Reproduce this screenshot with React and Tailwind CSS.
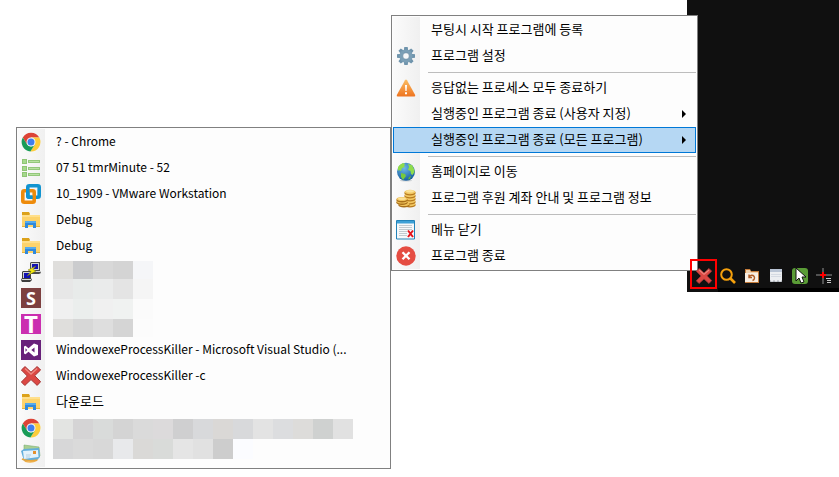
import React from 'react';

function ChromeIcon() {
  return (
    <svg className="w-5 h-5" viewBox="0 0 20 20">
      <path d="M1.8 5.4A9.5 9.5 0 0 1 18.3 5.6H10L5.9 12.2z" fill="#dc4437" />
      <path d="M18.3 5.6A9.5 9.5 0 0 1 9.4 19.5L14 12.3 13.8 7.8 10 5.6z" fill="#fdcd3b" />
      <path d="M1.8 5.4A9.5 9.5 0 0 0 9.4 19.5L14 12.3 10 14.4 6 12.2z" fill="#199c58" />
      <circle cx="10" cy="10" r="4.500" fill="#f5f7fb" />
      <circle cx="10" cy="10" r="3.500" fill="#3f7fee" />
    </svg>
  );
}

function ListIcon() {
  return (
    <svg className="w-5 h-5" viewBox="0 0 20 20">
      {[1, 8, 14].map(y => (
        <g key={y}>
          <rect x="1" y={y} width="5" height="5" fill="#8fc474" />
          <rect x="2" y={y + 1} width="3" height="3" fill="#a5d98c" />
          <rect x="7" y={y + 1} width="12" height="3" fill="#93c77b" />
          <rect x="8" y={y + 2} width="10" height="1" fill="#b8e2a1" />
        </g>
      ))}
    </svg>
  );
}

function VmwareIcon() {
  return (
    <svg className="w-5 h-5" viewBox="0 0 20 20" fill="none" strokeWidth="3.600">
      <rect x="6.800" y="1.800" width="11.400" height="11.400" rx="1.500" stroke="#1294d0" />
      <rect x="1.800" y="6.800" width="11.400" height="11.400" rx="1.500" stroke="#ee8b0b" />
      <path d="M6.800 5v6.500q0 1.700 1.700 1.700h3" stroke="#1294d0" />
    </svg>
  );
}

function FolderIcon() {
  return (
    <svg className="w-5 h-5" viewBox="0 0 20 20">
      <path d="M1 3h7l1 2h10v12H1z" fill="#fdd36b" />
      <path d="M1 2h7l1 2-1 1H1z" fill="#dca21b" />
      <path d="M1 5h18v2H1z" fill="#ffdf8b" />
      <path d="M4 18v-6q0-1 1-1h9q1 0 1 1v6h-3v-3H7v3z" fill="#3089dc" />
      <path d="M4 12q0-1 1-1h9q1 0 1 1v1H4z" fill="#55abee" />
      <path d="M1 16h3v1H1zM15 16h4v1h-4z" fill="#e6b43e" />
    </svg>
  );
}

function PuttyIcon() {
  return (
    <svg className="w-5 h-5" viewBox="0 0 20 20">
      <path d="M9 1l1-1h9v9l1 2-2 1H9l-1-2 1-2z" fill="#4c4c4c" />
      <path d="M10 1h8v7h-8z" fill="#d3d3d3" />
      <path d="M11 2h6v5h-6z" fill="#1111b6" />
      <path d="M9 9h10v1H9z" fill="#d9d9d9" />
      <path d="M1 10l1-1h8v7l1 2-2 2H1l-1-2 1-2z" fill="#3f3f3f" />
      <path d="M2 10h7v6H2z" fill="#d3d3d3" />
      <path d="M3 11h6v5H3z" fill="#1111b6" />
      <path d="M1 17h9v1H1z" fill="#d9d9d9" />
      <path d="M15 4L7 8l3 1.500L6 14l9-5-3-1.500z" fill="#f4e811" stroke="#6b6b12" strokeWidth=".5" />
    </svg>
  );
}

function VisualStudioIcon() {
  return (
    <svg className="w-5 h-5" viewBox="0 0 20 20">
      <path d="M0 0h20v20H0z" fill="#68217a" />
      <path d="M13 3.500l4 1.500v10L13 16.500 7.500 11.800 4.500 14.200 3 13.400V6.600l1.500-.8 3 2.400zM13.500 7.400L10.300 10l3.200 2.600zM4.500 8.300v3.400L6.200 10z" fill="#fff" fillRule="evenodd" />
    </svg>
  );
}

function CrossIcon({ className }) {
  return (
    <svg className={className} viewBox="0 0 20 20">
      <path d="M4 .6L10 6.200 16.200.5 19.600 4 13.700 9.700 19.600 15.700 16.200 19.400 10 13.600 3.800 19.500.4 16 6.300 10 .4 4z" fill="#dc4843" stroke="#a53635" />
      <path d="M4 2.500L10 8l6.200-5.500" fill="none" stroke="#ee8a82" strokeWidth="1.300" />
    </svg>
  );
}

function MailIcon() {
  return (
    <svg className="w-5 h-5" viewBox="0 0 20 20">
      <path d="M3 1l15 2 1 9-16-1z" fill="#a9cf92" stroke="#7bae74" strokeWidth=".6" />
      <path d="M1 14q3 4 9 3 6 0 9-4l-3 4q-5 3-12 1z" fill="#f1b34f" />
      <path d="M0 7l3-2 15-1 1 9-3 3-13 1z" fill="#62aedb" />
      <path d="M2 7l15-1 .5 7L3 15z" fill="#e3f2fb" />
      <path d="M12 7h3v3h-3z" fill="#e4902c" />
      <path d="M5 11h5M5 13h4" stroke="#b4d0e0" />
      <path d="M1 15q6 3 15 1" fill="none" stroke="#e7a63d" strokeWidth="1.500" />
    </svg>
  );
}

function GearIcon() {
  return (
    <svg className="w-5 h-5" viewBox="0 0 20 20">
      <g fill="#6f94ac">
        {[0, 45, 90, 135].map(a => (
          <path key={a} d="M8.300 1h3.400l.6 4h-4.600zM7.700 15h4.600l-.6 4H8.300z" transform={`rotate(${a} 10 10)`} />
        ))}
      </g>
      <circle cx="10" cy="10" r="4.800" fill="none" stroke="#7b9fb6" strokeWidth="3.500" />
      <circle cx="10" cy="10" r="3.300" fill="#f7f8f9" stroke="#557b96" strokeWidth=".6" />
    </svg>
  );
}

function WarningIcon() {
  return (
    <svg className="w-5 h-5" viewBox="0 0 20 20">
      <defs>
        <linearGradient id="warn" x1="0" y1="0" x2="0" y2="1">
          <stop offset="0" stopColor="#fbbd62" />
          <stop offset="1" stopColor="#ee7420" />
        </linearGradient>
      </defs>
      <path d="M9 2.300q1-1.600 2 0L19.200 17q.4 1.500-1 1.500H1.800q-1.400 0-1-1.500z" fill="url(#warn)" />
      <path d="M9 7h2l-.4 6H9.400zM9 14.300h2v1.900H9z" fill="#fff" />
    </svg>
  );
}

function GlobeIcon() {
  return (
    <svg className="w-5 h-5" viewBox="0 0 20 20">
      <defs>
        <radialGradient id="ocean" cx=".4" cy=".3" r=".7">
          <stop offset="0" stopColor="#6db8ea" />
          <stop offset="1" stopColor="#17609f" />
        </radialGradient>
      </defs>
      <ellipse cx="10" cy="18.500" rx="6" ry="1" fill="#cfd3d6" />
      <circle cx="10" cy="9.800" r="9" fill="url(#ocean)" />
      <path d="M2 5q2-3 5-4l2 1-1 2 1 1-3 1-1 3-2-1-1 1z" fill="#8fdc4c" />
      <path d="M5 11l4 1 1 2-3 4-2-3z" fill="#77ca3c" />
      <path d="M12 2l4 1 2 4 .5 3-2 3-1.500-1-.5-3-2.500-1 1-3z" fill="#8fdc4c" />
      <path d="M13 15l2-1-1 3-2 .5z" fill="#5fb539" />
    </svg>
  );
}

function CoinsIcon() {
  return (
    <svg className="w-5 h-5" viewBox="0 0 20 20">
      {[17, 14, 11, 8, 5].map(y => (
        <g key={y}>
          <ellipse cx="14" cy={y} rx="5.700" ry="2.500" fill="#b67a1e" />
          <ellipse cx="14" cy={y - 1} rx="5.500" ry="2.200" fill="#f2c863" />
        </g>
      ))}
      <ellipse cx="14" cy="3.300" rx="4" ry="1.300" fill="#fbe29a" />
      {[17, 14.5, 12].map((y, i) => (
        <g key={y}>
          <ellipse cx={i === 0 ? 8 : 6} cy={y} rx="5.700" ry="2.500" fill="#a86f1b" />
          <ellipse cx={i === 0 ? 8 : 6} cy={y - 1} rx="5.500" ry="2" fill="#f0c35b" />
        </g>
      ))}
      <ellipse cx="6" cy="10.700" rx="4" ry="1.200" fill="#fbe29a" />
    </svg>
  );
}

function CloseMenuIcon() {
  return (
    <svg className="w-5 h-5" viewBox="0 0 20 20">
      <path d="M.5.500h18v18.500H.5z" fill="#f5f8fa" stroke="#2183b9" />
      <path d="M1 1h17v2.500H1z" fill="#3da0d6" />
      <path d="M3 5.500h13M3 7.500h13M3 9.500h13M3 11.500h8M3 13.500h8M3 15.500h8" stroke="#c2cacf" />
      <path d="M12 10.500l5 6.500M17 10.500l-5 6.500" stroke="#e5131b" strokeWidth="2" />
    </svg>
  );
}

function ExitIcon() {
  return (
    <svg className="w-5 h-5" viewBox="0 0 20 20">
      <circle cx="10" cy="10" r="9.700" fill="#e54d42" />
      <path d="M6.500 6.200l7 7M13.500 6.200l-7 7" stroke="#fff" strokeWidth="2.300" />
    </svg>
  );
}

function LetterIcon({ letter, className }) {
  return (
    <span className={`w-5 h-5 flex items-center justify-center text-white font-bold leading-5 font-['Open_Sans',sans-serif] ${className}`}>
      {letter}
    </span>
  );
}

function SearchTrayIcon() {
  return (
    <svg className="w-4 h-4" viewBox="0 0 16 16" fill="none" stroke="#f6a10c">
      <circle cx="6.500" cy="6.500" r="5.300" strokeWidth="2" />
      <path d="M10.500 10.500l4.500 4.500" strokeWidth="2.600" />
    </svg>
  );
}

function RestoreTrayIcon() {
  return (
    <svg className="w-4 h-4" viewBox="0 0 16 16">
      <path d="M1 1h5l1 2h8v12H1z" fill="#c47b3a" />
      <path d="M1 5h13v9H1z" fill="#f8eee2" />
      <path d="M2 2h4l1 2h7v1H2z" fill="#f1d3ae" />
      <path d="M5.500 8.500a2.700 2.700 0 1 1 3 4M5 6.500v3h3" fill="none" stroke="#b05d25" strokeWidth="1.400" />
    </svg>
  );
}

function NoteTrayIcon() {
  return (
    <svg className="w-4 h-4" viewBox="0 0 16 16">
      <path d="M2 1h12v13H2z" fill="#eceef1" />
      <path d="M2 1h12v3H2z" fill="#b9c4d4" />
      <path d="M3 6.500h10M3 8.500h10" stroke="#d5dae2" />
      <path d="M2 14v-2l2 2 2-2 2 2 2-2 2 2 2-2v2z" fill="#a9aeb5" />
    </svg>
  );
}

function PointerTrayIcon() {
  return (
    <svg className="w-4 h-4" viewBox="0 0 16 16">
      <rect width="16" height="16" rx="3" fill="#5a9c36" />
      <path d="M4 0v13l3-3 2 5 3-1-2-5h4z" fill="#fff" stroke="#111" />
    </svg>
  );
}

function CrosshairTrayIcon() {
  return (
    <svg className="w-4 h-4" viewBox="0 0 16 16">
      <path d="M7 0v16M0 7h16" stroke="#525252" strokeWidth="2" />
      <path d="M7 4v6M4 7h6" stroke="#f00" strokeWidth="2" />
      <path d="M10 10.500h5M11 12.500h4M11 14.500h4" stroke="#c8c8c8" />
    </svg>
  );
}

const WINDOWS_TOP = [
  { icon: <ChromeIcon />, label: '? - Chrome' },
  { icon: <ListIcon />, label: '07 51 tmrMinute - 52' },
  { icon: <VmwareIcon />, label: '10_1909 - VMware Workstation' },
  { icon: <FolderIcon />, label: 'Debug' },
  { icon: <FolderIcon />, label: 'Debug' },
];

const WINDOWS_BOTTOM = [
  { icon: <VisualStudioIcon />, label: 'WindowexeProcessKiller - Microsoft Visual Studio (...' },
  { icon: <CrossIcon className="w-5 h-5" />, label: 'WindowexeProcessKiller -c' },
  { icon: <FolderIcon />, label: '다운로드', textSize: 'text-[13px]' },
];

// groups are split by separators
const MENU_GROUPS = [
  [
    { label: '부팅시 시작 프로그램에 등록' },
    { icon: <GearIcon />, label: '프로그램 설정' },
  ],
  [
    { icon: <WarningIcon />, label: '응답없는 프로세스 모두 종료하기' },
    { label: '실행중인 프로그램 종료 (사용자 지정)', submenu: true },
    { label: '실행중인 프로그램 종료 (모든 프로그램)', submenu: true, active: true },
  ],
  [
    { icon: <GlobeIcon />, label: '홈페이지로 이동' },
    { icon: <CoinsIcon />, label: '프로그램 후원 계좌 안내 및 프로그램 정보' },
  ],
  [
    { icon: <CloseMenuIcon />, label: '메뉴 닫기' },
    { icon: <ExitIcon />, label: '프로그램 종료' },
  ],
];

// hidden window titles, one color per block
const SHORT_MOSAIC = [
  { height: 'h-[18px]', cells: ['#dfdedc', '#cbccce', '#d8d8d8', '#d4d4d4', '#f5f6f8'] },
  { height: 'h-5', cells: ['#e7e7e7', '#e8ebea', '#eaebeb', '#e4e4e4', '#f5f5f5'] },
  { height: 'h-5', cells: ['#f0f0f0', '#ebeeed', '#f0f0f0', '#f0f2f1', '#fbfbfb'] },
  { height: 'h-[18px]', cells: ['#dfdedc', '#d7d7d7', '#dedede', '#d5d5d5', '#fcfcfc'] },
];

const LONG_MOSAIC = [
  {
    height: 'h-5',
    cells: ['#e3e4e2', '#d5d4d5', '#d9dbda', '#d4d4d4', '#dadada', '#dcdadb', '#cfcfd0', '#d8d9db', '#dad8d6', '#d8d9db', '#e3e3e3', '#dcdddf', '#dddcda', '#cfd1d0', '#e1e1e1'],
  },
  {
    height: 'h-5',
    cells: ['#d7d7d8', '#dadada', '#d8d8d8', '#e8e9eb', '#dad9d7', '#d9dbd9', '#e5e5e5', '#e1e1e1', '#cdcdcd', '#fbfcff'],
  },
];

function IconCell({ children, className = '' }) {
  return (
    <span className={`w-[27px] h-[26px] pl-[3px] flex items-center shrink-0 ${className}`}>
      {children}
    </span>
  );
}

const GUTTER = 'bg-linear-to-r from-[#fbfbfb] to-[#f0f0f0]';

function MenuItem({ icon, label, submenu, active, textSize = '' }) {
  return (
    <button
      type="button"
      role="menuitem"
      aria-haspopup={submenu ? 'menu' : undefined}
      className={`w-full h-[26px] flex items-center text-left ${active ? 'bg-[#b5d7f3] outline outline-1 -outline-offset-1 outline-[#0078d7]' : ''}`}
    >
      <IconCell className={active ? '' : GUTTER}>{icon}</IconCell>
      <span className={`flex-1 pl-[11px] pb-[2px] whitespace-nowrap ${textSize}`}>{label}</span>
      {submenu && (
        <svg className="w-1 h-2 mr-[10px]" viewBox="0 0 4 8">
          <path d="M0 0l4 4-4 4z" fill="#000" />
        </svg>
      )}
    </button>
  );
}

function Separator() {
  return (
    <div role="separator" className="h-[6px] flex items-center">
      <span className={`w-[27px] h-full shrink-0 ${GUTTER}`} />
      <span className="flex-1 ml-2 h-px bg-[#bdbdbd]" />
    </div>
  );
}

function HiddenItems({ icons, rows, className }) {
  return (
    <div className="flex items-start">
      <div>
        {icons.map((icon, i) => (
          <IconCell key={i} className={GUTTER}>{icon}</IconCell>
        ))}
      </div>
      <div className={`pl-2 ${className}`}>
        {rows.map((row, i) => (
          <div key={i} className={`flex ${row.height}`}>
            {row.cells.map((color, j) => (
              <span key={j} className="w-5" style={{ backgroundColor: color }} />
            ))}
          </div>
        ))}
      </div>
    </div>
  );
}

export default function App() {
  return (
    <div className="min-h-screen bg-white flex items-start pl-4 text-black font-['Noto_Sans_CJK_KR',sans-serif]">
      {/* Running windows */}
      <div role="menu" className="w-[375px] shrink-0 mt-[127px] p-px text-[12px] leading-5 bg-[#fdfdfd] border border-[#808080]">
        {WINDOWS_TOP.map((item, i) => (
          <MenuItem key={i} {...item} />
        ))}
        <HiddenItems
          className="pt-[2px]"
          icons={[
            <PuttyIcon />,
            <LetterIcon letter="S" className="text-lg bg-[#7d4040]" />,
            <LetterIcon letter="T" className="text-2xl bg-[#cb2fb0]" />,
          ]}
          rows={SHORT_MOSAIC}
        />
        {WINDOWS_BOTTOM.map((item, i) => (
          <MenuItem key={i} {...item} />
        ))}
        <HiddenItems className="pt-1" icons={[<ChromeIcon />, <MailIcon />]} rows={LONG_MOSAIC} />
      </div>

      {/* Tray menu */}
      <div role="menu" className="relative z-10 w-[307px] shrink-0 mt-[15px] p-px text-[13px] leading-5 bg-[#fdfdfd] border border-[#808080]">
        {MENU_GROUPS.map((group, i) => (
          <React.Fragment key={i}>
            {i > 0 && <Separator />}
            {group.map(item => (
              <MenuItem key={item.label} {...item} />
            ))}
          </React.Fragment>
        ))}
      </div>

      {/* Desktop corner with the tray */}
      <div className="flex-1 -ml-[11px] pt-[259px] bg-[#101010]">
        <div className="flex pl-[3px]">
          <button type="button" aria-label="WindowexeProcessKiller" className="relative z-20 w-[27px] h-[30px] mb-[3px] shrink-0 flex items-center justify-center pt-1 border-2 border-[#f00]">
            <CrossIcon className="w-4 h-4" />
          </button>
          <div className="flex-1 ml-px pl-[2px] pt-[9px] flex items-start gap-2 border-b-4 border-black">
            <button type="button" aria-label="Search"><SearchTrayIcon /></button>
            <button type="button" aria-label="Restore"><RestoreTrayIcon /></button>
            <button type="button" aria-label="Notes"><NoteTrayIcon /></button>
            <button type="button" aria-label="Pointer"><PointerTrayIcon /></button>
            <button type="button" aria-label="Crosshair"><CrosshairTrayIcon /></button>
          </div>
        </div>
      </div>
    </div>
  );
}
